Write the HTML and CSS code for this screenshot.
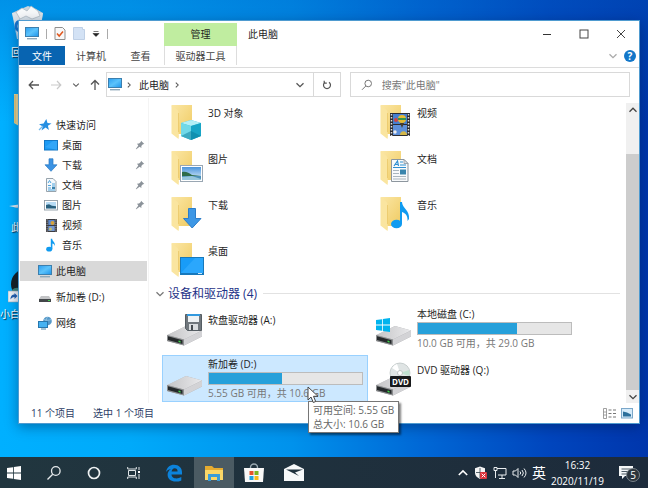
FILE: index.html
```html
<!DOCTYPE html>
<html lang="zh-CN">
<head>
    <meta charset="UTF-8">
    <meta name="viewport" content="width=device-width, initial-scale=1.0">
    <title>此电脑</title>
    <link rel="stylesheet" href="styles.css">
</head>
<body>
    <!-- Shared icons -->
    <svg class="sprite" width="0" height="0" aria-hidden="true">
        <defs>
            <linearGradient id="g-folder" x1="0" y1="0" x2="1" y2="1">
                <stop offset="0" stop-color="#fbe7a6"/><stop offset="1" stop-color="#f0cb62"/>
            </linearGradient>
            <linearGradient id="g-screen" x1="0" y1="0" x2="1" y2="1">
                <stop offset="0" stop-color="#2a9df0"/><stop offset=".5" stop-color="#5cc3fb"/><stop offset="1" stop-color="#1c93ea"/>
            </linearGradient>
            <linearGradient id="g-drive" x1="0" y1="0" x2="1" y2="0">
                <stop offset="0" stop-color="#c4c4c6"/><stop offset="1" stop-color="#e9e9eb"/>
            </linearGradient>
            <linearGradient id="g-sky" x1="0" y1="0" x2="0" y2="1">
                <stop offset="0" stop-color="#4a94dc"/><stop offset="1" stop-color="#e4f2fb"/>
            </linearGradient>
        </defs>
        <symbol id="i-pc" viewBox="0 0 14 13">
            <rect x=".5" y=".5" width="13" height="9" fill="url(#g-screen)" stroke="#3c7fae"/>
            <path d="M2 11.7h10" stroke="#8fa9ba" stroke-width="1.4"/>
        </symbol>
        <symbol id="i-desktop" viewBox="0 0 14 14">
            <rect x=".5" y="2.5" width="13" height="9.5" fill="#1d9bf5" stroke="#1377c4"/>
            <path d="M1 9l8-6h4v9z" fill="#45b2fb" opacity=".5"/>
        </symbol>
        <symbol id="i-down" viewBox="0 0 14 14">
            <path d="M5 .8h4v6h4L7 13.3 1 6.800h4z" fill="#3b93e3" stroke="#2a78c2" stroke-width=".7"/>
        </symbol>
        <symbol id="i-doc" viewBox="0 0 14 14">
            <path d="M2.500 .5h6.500l3 3v10h-9.500z" fill="#f4f8fb" stroke="#8b98a3" stroke-width=".9"/>
            <path d="M4 5l1.500-2.500L7 5M4 7.500h3M8 6h3M8 8h3M4 10h3M4 12h7" fill="none" stroke="#4da3dc"/>
            <rect x="8" y="9" width="3" height="2" fill="#3b82ac"/>
        </symbol>
        <symbol id="i-pic" viewBox="0 0 14 14">
            <rect x=".5" y="2.500" width="13" height="9.500" fill="#fff" stroke="#8f9ba5" stroke-width=".9"/>
            <rect x="2" y="4" width="10" height="6.500" fill="#b8dcf5"/>
            <path d="M2 7l3-.8 3 1.500 4 .5v2.300H2z" fill="#28607e"/>
        </symbol>
        <symbol id="i-film" viewBox="0 0 14 14">
            <rect x="2" y="1" width="11" height="13" fill="#3b3b40"/>
            <rect x="4.300" y="2" width="6.400" height="5" fill="#5d88cb"/><rect x="4.300" y="8" width="6.400" height="5" fill="#7599d2"/>
            <circle cx="8.500" cy="5" r="2" fill="#d7a33a"/><circle cx="6.500" cy="11" r="1.500" fill="#c7c06a"/>
            <path d="M3.100 1.500V14M11.900 1.500V14" stroke="#bbb" stroke-dasharray="1 1.200"/>
        </symbol>
        <symbol id="i-note" viewBox="0 0 14 14">
            <ellipse cx="5.200" cy="11.200" rx="3" ry="2.400" fill="#109bf0"/>
            <path d="M6.800 11V.8h1.400c0 3 3.600 3.200 2.500 7.500-.1-1.900-1.200-2.600-2.300-2.800V11z" fill="#109bf0"/>
        </symbol>
        <symbol id="i-star" viewBox="0 0 14 14">
            <path d="M8.300 1l1.200 4 4 .4-3.600 2.400 1 4.200-3.300-2.400L3.500 12.500l1.300-4L1 6.200l4.600-.6z" fill="#268fe2"/>
            <path d="M1 12l4-4" stroke="#73b9ec" stroke-width="1.200"/>
        </symbol>
        <symbol id="i-smalldrive" viewBox="0 0 14 14">
            <path d="M3 6h8l2 3H1z" fill="#c3c4c6"/><rect x="1" y="9" width="12" height="3" fill="#424649"/>
            <rect x="10" y="10" width="2" height="1" fill="#46d052"/>
        </symbol>
        <symbol id="i-net" viewBox="0 0 14 14">
            <circle cx="9.500" cy="5" r="4.300" fill="#5598c8"/><path d="M6 3.500c2 1 5 1 7 0M9.500 1c-2 3-2 5 0 8" stroke="#a8d0ea" fill="none" stroke-width=".7"/>
            <rect x=".5" y="5.500" width="9" height="6" fill="#45b2f2" stroke="#2777ae"/><path d="M3 13h5" stroke="#4b86a8"/>
        </symbol>
        <symbol id="i-pin" viewBox="0 0 10 10">
            <path d="M6 .7L9.300 4l-1.400.3-1.600 1.800.1 1.900L4.600 6.800 1.300 9.300.8 8.900 3.300 5.500 2 3.700l2-.1 1.800-1.500z" fill="#8b9299"/>
        </symbol>
        <symbol id="i-folder" viewBox="0 0 38 42">
            <path d="M4.500 1H25v29H11z" fill="url(#g-folder)"/>
            <path d="M4.500 1.500L10 5.500c1.300 1 1.500 2 1.500 4V28c0 2 1 3 0 7l-7-5.500z" fill="#fae5a0"/>
            <path d="M11.500 9v19" stroke="#e6bf59" stroke-width=".6"/>
        </symbol>
        <symbol id="i-drive" viewBox="0 0 38 42">
            <path d="M0 27.500L19 18l16 4.500v6L17 37.500 0 33z" fill="#a5a6a9"/>
            <path d="M0 27L19 18l16 4.500L17 31.500z" fill="url(#g-drive)"/>
            <path d="M17 31.500l18-9v6L17 37.500z" fill="#d3d3d6"/>
            <path d="M0 27l17 4.500v6L0 33z" fill="#8c8e90"/>
            <path d="M1 28.300l14.500 4v3.700L1 32z" fill="#25292b"/>
            <path d="M11.500 32.500l2 .6v1.600l-2-.6z" fill="#3fd54b"/>
        </symbol>
        <symbol id="i-win" viewBox="0 0 14 14">
            <path d="M0 2l6-.8v5.400H0zM6.800 1L14 0v6.600H6.800zM0 7.400h6v5.400L0 12zM6.800 7.400H14V14l-7.200-1z" fill="currentColor"/>
        </symbol>
        <symbol id="i-chev-down" viewBox="0 0 10 10"><path d="M1.500 3.200L5 6.700l3.500-3.500" fill="none" stroke="currentColor" stroke-width="1.300"/></symbol>
        <symbol id="i-chev-up" viewBox="0 0 10 10"><path d="M1.500 6.700L5 3.200l3.500 3.500" fill="none" stroke="currentColor" stroke-width="1.300"/></symbol>
        <symbol id="i-chev-right" viewBox="0 0 10 10"><path d="M3.500 2l3 3-3 3" fill="none" stroke="currentColor" stroke-width="1.300"/></symbol>
    </svg>

    <div class="desktop">
        <!-- Desktop icons, mostly covered by the window -->
        <div class="desk-icon bin">
            <svg width="34" height="36" viewBox="0 0 34 36">
                <path d="M1 8l9-4 7-3 8 3 7 4-5 26-19 1z" fill="#cbd6de"/>
                <path d="M1 8l31 0-4 26H6z" fill="#dfe7ec" opacity=".8"/>
                <path d="M5 7l6-4 5 3 4-5 7 5 2 5-8 3-6-3-6 3z" fill="#f7f9fa" stroke="#aab6bf" stroke-width=".7"/>
                <path d="M9 16c-4 1-5 5-3 9M5 23l4 4" stroke="#1676cf" stroke-width="3" fill="none"/>
            </svg>
            <span>回</span>
        </div>
        <div class="desk-icon files">
            <svg width="26" height="32" viewBox="0 0 26 32"><path d="M0 0h26v32H5L0 29z" fill="#f3dc95"/><path d="M1 1v28" stroke="#d9bd6a"/></svg>
        </div>
        <div class="desk-icon plane">
            <svg width="26" height="10" viewBox="0 0 26 10"><path d="M0 4L26 0v10z" fill="#e4eef4"/><path d="M5 5l21 5V4z" fill="#a9b9c3"/></svg>
            <span>此</span>
        </div>
        <div class="desk-icon app">
            <svg width="30" height="36" viewBox="0 0 30 36">
                <circle cx="18" cy="16" r="15" fill="#152024"/><path d="M4 22c4-4 9-3 14 4l-5 5C8 30 4 26 4 22z" fill="#3c8579"/>
                <rect x="0" y="23" width="11" height="11" fill="#f2f6f9" stroke="#92a4b1" stroke-width=".6"/>
                <path d="M2.500 31.500c0-4 2-5 4-5V25l3 3-3 3v-2c-2 0-3 1-4 2.500z" fill="#2361b1"/>
            </svg>
            <span>小白</span>
        </div>

        <main class="window">
            <header class="titlebar">
                <div class="quick-tools">
                    <svg width="14" height="13"><use href="#i-pc"/></svg>
                    <i class="sep"></i>
                    <button aria-label="属性">
                        <svg width="12" height="13" viewBox="0 0 12 13"><path d="M1 .5h7.500L11 3v9.500H1z" fill="#f8f8f8" stroke="#8f8f8f"/><path d="M3 6.500L5.200 9 9 4.500" fill="none" stroke="#e0571e" stroke-width="1.500"/></svg>
                    </button>
                    <button aria-label="新建文件夹">
                        <svg width="12" height="13" viewBox="0 0 12 13"><path d="M.5.500h9v2h2v10H.5z" fill="#d3e2f5" stroke="#bfd0e6"/></svg>
                    </button>
                    <button aria-label="自定义快速访问工具栏">
                        <svg width="8" height="8" viewBox="0 0 8 8"><path d="M1.500 1.500h5M1 3.500h6l-3 3z" fill="#222" stroke="#222" stroke-width=".6"/></svg>
                    </button>
                    <i class="sep"></i>
                </div>
                <div class="context-tab">管理</div>
                <h1>此电脑</h1>
                <div class="controls">
                    <button aria-label="最小化"><svg width="10" height="10"><path d="M1 5.500h8" stroke="#333"/></svg></button>
                    <button aria-label="最大化"><svg width="10" height="10"><rect x="1" y="1" width="8" height="8" fill="none" stroke="#444"/></svg></button>
                    <button aria-label="关闭"><svg width="10" height="10"><path d="M1 1l8 8M9 1L1 9" stroke="#444"/></svg></button>
                </div>
            </header>

            <nav class="ribbon">
                <button class="file">文件</button>
                <button class="tab-computer">计算机</button>
                <button class="tab-view">查看</button>
                <button class="tab-drive">驱动器工具</button>
                <div class="ribbon-end">
                    <button aria-label="展开功能区"><svg class="pale" width="10" height="10"><use href="#i-chev-down"/></svg></button>
                    <button class="help" aria-label="帮助">?</button>
                </div>
            </nav>

            <div class="addressbar">
                <div class="nav-buttons">
                    <button aria-label="后退"><svg width="12" height="10" viewBox="0 0 12 10"><path d="M11 5H1.500M5 1L1.200 5 5 9" fill="none" stroke="#555" stroke-width="1.300"/></svg></button>
                    <button aria-label="前进" disabled><svg width="12" height="10" viewBox="0 0 12 10"><path d="M1 5h9.500M7 1l3.800 4L7 9" fill="none" stroke="#c9c9c9" stroke-width="1.200"/></svg></button>
                    <button aria-label="最近位置"><svg width="8" height="8"><use href="#i-chev-down"/></svg></button>
                    <button aria-label="上移"><svg width="10" height="12" viewBox="0 0 10 12"><path d="M5 11V1.500M1 5.500l4-4 4 4" fill="none" stroke="#555" stroke-width="1.300"/></svg></button>
                </div>
                <div class="path">
                    <svg width="14" height="13"><use href="#i-pc"/></svg>
                    <svg width="8" height="8"><use href="#i-chev-right"/></svg>
                    <a href="#">此电脑</a>
                    <svg width="8" height="8"><use href="#i-chev-right"/></svg>
                    <button class="path-drop" aria-label="以前的位置"><svg width="10" height="10"><use href="#i-chev-down"/></svg></button>
                    <button class="refresh" aria-label="刷新"><svg width="10" height="10" viewBox="0 0 10 10"><path d="M3 2.200A3.500 3.500 0 1 0 7 2.200M2.200.800v2.400h2.600" fill="none" stroke="#555" stroke-width="1.200"/></svg></button>
                </div>
                <label class="search">
                    <svg width="12" height="12" viewBox="0 0 12 12"><circle cx="7.200" cy="4.500" r="3.300" fill="none" stroke="#777"/><path d="M4.800 7L1 10.800" stroke="#777"/></svg>
                    <input type="text" aria-label="搜索" placeholder='搜索"此电脑"'>
                </label>
            </div>

            <div class="body">
                <nav class="sidebar">
                    <a class="side" href="#"><svg width="14" height="14"><use href="#i-star"/></svg>快速访问</a>
                    <a class="side child" href="#"><svg width="14" height="14"><use href="#i-desktop"/></svg>桌面<svg class="pin" width="10" height="10"><use href="#i-pin"/></svg></a>
                    <a class="side child" href="#"><svg width="14" height="14"><use href="#i-down"/></svg>下载<svg class="pin" width="10" height="10"><use href="#i-pin"/></svg></a>
                    <a class="side child" href="#"><svg width="14" height="14"><use href="#i-doc"/></svg>文档<svg class="pin" width="10" height="10"><use href="#i-pin"/></svg></a>
                    <a class="side child" href="#"><svg width="14" height="14"><use href="#i-pic"/></svg>图片<svg class="pin" width="10" height="10"><use href="#i-pin"/></svg></a>
                    <a class="side child" href="#"><svg width="14" height="14"><use href="#i-film"/></svg>视频</a>
                    <a class="side child" href="#"><svg width="14" height="14"><use href="#i-note"/></svg>音乐</a>
                    <a class="side top current" href="#"><svg width="14" height="13"><use href="#i-pc"/></svg>此电脑</a>
                    <a class="side top" href="#"><svg width="14" height="14"><use href="#i-smalldrive"/></svg>新加卷 (D:)</a>
                    <a class="side top" href="#"><svg width="14" height="14"><use href="#i-net"/></svg>网络</a>
                </nav>

                <section class="content">
                    <div class="tiles folders">
                        <div class="tile">
                            <svg width="38" height="42" viewBox="0 0 38 42"><use href="#i-folder"/>
                                <path d="M14 19l10-3 10 3v13l-10 4-10-4z" fill="#35bfd6"/><path d="M14 19l10-3 10 3-10 3z" fill="#b4eff6"/><path d="M14 19l10 3v14l-10-4z" fill="#71d9e8"/><path d="M24 22l10-3v13l-10 4z" fill="#18a5c6"/><path d="M14 32l10-5 10 5-10 4z" fill="#087b99" opacity=".5"/>
                            </svg>
                            <span>3D 对象</span>
                        </div>
                        <div class="tile">
                            <svg width="38" height="42" viewBox="0 0 38 42"><use href="#i-folder"/>
                                <rect x="14" y="9" width="20" height="23" fill="#2c2d32"/><rect x="17" y="10" width="14" height="10" fill="#477fcf"/><rect x="17" y="21" width="14" height="10" fill="#5e90da"/>
                                <path d="M15.500 10v22M32.500 10v22" stroke="#dfdfdf" stroke-width="1.500" stroke-dasharray="1.500 1.500"/>
                                <circle cx="26" cy="15" r="4" fill="#e6bb33"/><path d="M22 15h8" stroke="#36964e" stroke-width="2"/><path d="M24 19l2 5 2-5z" fill="#493d2b"/><circle cx="20" cy="16" r="2" fill="#cf4644"/><path d="M24 31c0-5 7-5 7 0z" fill="#d4b749"/><circle cx="19" cy="28" r="1.700" fill="#eee"/>
                            </svg>
                            <span>视频</span>
                        </div>
                        <div class="tile">
                            <svg width="38" height="42" viewBox="0 0 38 42"><use href="#i-folder"/>
                                <rect x="13.500" y="15.500" width="22" height="16" fill="#fff" stroke="#9aa7b3"/><rect x="15" y="17" width="19" height="13" fill="url(#g-sky)"/>
                                <path d="M15 22c4-1 7 1 10 3l9 1v1H15z" fill="#2e6c49"/><path d="M15 26h19v4H15z" fill="#4d91b8"/><path d="M15 27l10-1 9 3v1H15z" fill="#97c6dc"/>
                            </svg>
                            <span>图片</span>
                        </div>
                        <div class="tile">
                            <svg width="38" height="42" viewBox="0 0 38 42"><use href="#i-folder"/>
                                <path d="M15.500 9.500H28l4 4v18H15.500z" fill="#f8fafb" stroke="#8d969e"/><path d="M28 9.500v4h4z" fill="#dde4e9" stroke="#8d969e" stroke-width=".8"/>
                                <path d="M18 16l3.500-5 1 5M19.500 14.500h3M24 12h3M24 15h6M17 17.500h13" stroke="#2f8fd1" fill="none" stroke-width="1.200"/><path d="M17 20.500h6M17 23.500h6M17 26.500h13M17 29h13" stroke="#aab6be"/><rect x="24" y="19.500" width="6" height="5" fill="#3985ad"/>
                            </svg>
                            <span>文档</span>
                        </div>
                        <div class="tile">
                            <svg width="38" height="42" viewBox="0 0 38 42"><use href="#i-folder"/>
                                <path d="M21.500 12.500h7v10H34L25.200 32 16.500 22.500h5z" fill="#3d97e5" stroke="#2b7dca"/>
                            </svg>
                            <span>下载</span>
                        </div>
                        <div class="tile">
                            <svg width="38" height="42" viewBox="0 0 38 42"><use href="#i-folder"/>
                                <ellipse cx="20.500" cy="28" rx="5.500" ry="4.300" fill="#109bf0"/><path d="M24 28V6h2c0 6 8 8 7 17l-1.500 2c.5-5-2-8-5.500-9v12z" fill="#109bf0"/>
                            </svg>
                            <span>音乐</span>
                        </div>
                        <div class="tile">
                            <svg width="38" height="42" viewBox="0 0 38 42"><use href="#i-folder"/>
                                <rect x="13.500" y="15.500" width="23" height="17" fill="#189cf8" stroke="#1879bb"/><path d="M14 31l14-15h8v15z" fill="#3eb1ff" opacity=".5"/><path d="M14 31.500h22" stroke="#1678bd"/><path d="M31 31.500h4" stroke="#c9e7fa"/>
                            </svg>
                            <span>桌面</span>
                        </div>
                    </div>

                    <h2><svg class="gray" width="10" height="10"><use href="#i-chev-down"/></svg>设备和驱动器 (4)</h2>

                    <div class="tiles drives">
                        <div class="tile plain">
                            <svg width="38" height="42" viewBox="0 0 38 42"><use href="#i-drive"/>
                                <path d="M18.500 6.500h16v16h-14l-2-2z" fill="#70777d" stroke="#555d63"/><rect x="21" y="6" width="11" height="8" fill="#eef2f4"/><rect x="20" y="6" width="13" height="2" fill="#3299de"/><rect x="22" y="16" width="9" height="6" fill="#d9dde0"/><rect x="24" y="17" width="2" height="5" fill="#454b50"/>
                            </svg>
                            <span>软盘驱动器 (A:)</span>
                        </div>
                        <div class="tile">
                            <svg class="logo-blue" width="38" height="42" viewBox="0 0 38 42"><use href="#i-drive"/><use href="#i-win" y="10" width="14" height="14"/></svg>
                            <div class="info">
                                <label for="disk-c">本地磁盘 (C:)</label>
                                <progress id="disk-c" max="100" value="65"></progress>
                                <small>10.0 GB 可用，共 29.0 GB</small>
                            </div>
                        </div>
                        <div class="tile selected">
                            <svg width="38" height="42" viewBox="0 0 38 42"><use href="#i-drive"/></svg>
                            <div class="info">
                                <label for="disk-d">新加卷 (D:)</label>
                                <progress id="disk-d" max="100" value="48"></progress>
                                <small>5.55 GB 可用，共 10.6 GB</small>
                            </div>
                            <svg class="cursor" width="13" height="18" viewBox="0 0 13 18"><path d="M1 1v13l3-3 2.300 5.500 2.400-1L6.500 10.300H11z" fill="#fff" stroke="#444"/></svg>
                            <div class="tooltip" role="tooltip">可用空间: 5.55 GB<br>总大小: 10.6 GB</div>
                        </div>
                        <div class="tile plain">
                            <svg width="38" height="42" viewBox="0 0 38 42"><use href="#i-drive"/>
                                <circle cx="24" cy="15" r="10" fill="#dfe4e4" stroke="#b6bebe" stroke-width=".7"/><path d="M24 15l-8-5a10 10 0 0 1 5-4z" fill="#fff"/><path d="M24 15l9-3a10 10 0 0 1 0 6z" fill="#bfe0cf"/><circle cx="24" cy="15" r="2.500" fill="#fff" stroke="#aab2b2" stroke-width=".7"/>
                                <rect x="14" y="18" width="21" height="11" rx="1" fill="#17191b"/><text class="dvd" x="24.500" y="27">DVD</text>
                            </svg>
                            <span>DVD 驱动器 (Q:)</span>
                        </div>
                    </div>
                </section>

                <div class="scrollbar">
                    <button aria-label="向上滚动"><svg width="10" height="10"><use href="#i-chev-up"/></svg></button>
                    <div class="track"><div class="thumb"></div></div>
                    <button aria-label="向下滚动"><svg width="10" height="10"><use href="#i-chev-down"/></svg></button>
                </div>
            </div>

            <footer class="status">
                <span>11 个项目</span>
                <span>选中 1 个项目</span>
                <div class="views">
                    <button aria-label="详细信息"><svg width="13" height="11" viewBox="0 0 13 11"><path d="M.5.500h3v10h-3zM.5 4h3M.5 7h3" fill="none" stroke="#888" stroke-width=".8"/><path d="M5.500 2h3M10 2h3M5.500 5.500h3M10 5.500h3M5.500 9h3M10 9h3" stroke="#777"/></svg></button>
                    <button aria-label="大图标"><svg width="12" height="11" viewBox="0 0 12 11"><rect x=".5" y=".5" width="11" height="9.500" fill="#d5ebfa" stroke="#7ba7c9"/><path d="M2 3.500l4 1 4 2v2H2z" fill="#2b6f9b"/></svg></button>
                </div>
            </footer>
        </main>

        <footer class="taskbar">
            <button class="start" aria-label="开始"><svg width="14" height="14"><use href="#i-win"/></svg></button>
            <button aria-label="搜索"><svg width="16" height="16" viewBox="0 0 16 16"><circle cx="9.800" cy="6" r="4.300" fill="none" stroke="#e6eaec" stroke-width="1.300"/><path d="M6.700 9.200L1.500 14.500" stroke="#e6eaec" stroke-width="1.300"/></svg></button>
            <button aria-label="Cortana"><svg width="14" height="14"><circle cx="7" cy="7" r="5.500" fill="none" stroke="#edf0f1" stroke-width="1.700"/></svg></button>
            <button aria-label="任务视图"><svg width="14" height="14" viewBox="0 0 14 14"><path d="M.7 1v2h8.600V1M.7 13v-2h8.600v2M1.500 4.500h7v5h-7zM12 1v3M12 8v5" fill="none" stroke="#dfe4e6"/><rect x="11" y="5" width="2" height="2" fill="#fff"/></svg></button>
            <button aria-label="Edge"><svg width="18" height="18" viewBox="0 0 18 18"><path d="M1 8C2 3 5 .8 9 .8c5 0 8 3.200 8 7.500v2.200H6.500c.2 3 2.500 3.900 4.800 3.900 2 0 3.500-.5 5-1.400v3.400c-1.500.8-3.500 1.200-5.600 1.200C6 17.600 2.600 15 2.600 10.800c0-2.700 1.300-4.600 3.400-5.900C3.500 5.200 2 6.500 1 8zM6.600 7.500h6c0-2-1.100-3.200-2.900-3.200-1.700 0-2.800 1.300-3.100 3.200z" fill="#0c83dc"/></svg></button>
            <button class="active" aria-label="文件资源管理器"><svg width="20" height="16" viewBox="0 0 20 16"><path d="M1 1h7l2 2h9v12H1z" fill="#e6ac30"/><path d="M1 5h18v10H1z" fill="#fbd767"/><path d="M4 9h12v7h-3v-4H7v4H4z" fill="#3a9dd9"/></svg></button>
            <button aria-label="Microsoft Store"><svg width="20" height="20" viewBox="0 0 20 20"><path d="M6.500 6V4.500a3.500 3.500 0 0 1 7 0V6" fill="none" stroke="#9baab2" stroke-width="1.400"/><path d="M0 5h20l-1 14H1z" fill="#f8f8f8"/><path d="M5.500 8h4v4h-4z" fill="#e5522b"/><path d="M10.500 8h4v4h-4z" fill="#7bb51e"/><path d="M5.500 13h4v4h-4z" fill="#1ea2df"/><path d="M10.500 13h4v4h-4z" fill="#f7b91a"/></svg></button>
            <button aria-label="邮件"><svg width="20" height="17" viewBox="0 0 20 17"><path d="M0 5l10-5 10 5v12H0z" fill="#f7f9fa"/><path d="M2 5.500h17l-8 3 4 3.500-6-3z" fill="#20323e"/></svg></button>
            <div class="tray">
                <button aria-label="显示隐藏的图标"><svg width="12" height="12"><use href="#i-chev-up"/></svg></button>
                <button aria-label="安全中心"><svg width="14" height="14" viewBox="0 0 14 14"><path d="M6 .5l5 1.800V7c0 2.500-2 4.500-5 6-3-1.500-5-3.500-5-6V2.300z" fill="#f4f4f4"/><path d="M6 2v10M2 6.500h8" stroke="#30414c" stroke-width=".8"/><rect x="6" y="6" width="7" height="7" rx="1" fill="#db343c"/><path d="M7.700 7.700l3.600 3.600M11.300 7.700l-3.600 3.600" stroke="#fff"/></svg></button>
                <button aria-label="网络"><svg width="14" height="14" viewBox="0 0 14 14"><path d="M4 2.500h9v6.500H5M1 1.500h3v3H1zM2.500 4.500V12M9 9v3M6 12.500h6" fill="none" stroke="#e9edef"/></svg></button>
                <button aria-label="音量"><svg width="15" height="14" viewBox="0 0 15 14"><path d="M1 5h2.500L6 2.500v9L3.500 9H1zM8 5.500q1.500 1.500 0 3M10 4q2.800 3 0 6M12 2.500q4 4.500 0 9" fill="none" stroke="#e9edef"/></svg></button>
                <button class="ime">英</button>
                <time datetime="2020-11-19T16:32">16:32<br>2020/11/19</time>
                <button class="notice" aria-label="5 条新通知"><svg width="14" height="14" viewBox="0 0 14 14"><path d="M0 0h14v10H6l-3 3v-3H0z" fill="#f4f6f7"/><path d="M2.500 3h9M2.500 5.500h9M2.500 8h6" stroke="#4d5b65"/></svg><span class="badge">5</span></button>
            </div>
        </footer>
    </div>
</body>
</html>
```

FILE: styles.css
```css
* {
    box-sizing: border-box;
}

body {
    margin: 0;
    font-family: "Open Sans", "Noto Sans CJK SC", sans-serif;
    font-size: 10px;
    line-height: 14px;
    color: #1f1f1f;
}

button {
    display: flex;
    align-items: center;
    justify-content: center;
    padding: 0;
    border: none;
    background: none;
    font: inherit;
    color: inherit;
}

a {
    color: inherit;
    text-decoration: none;
}

svg {
    display: block;
    flex: none;
}

.sprite {
    position: absolute;
}

.desktop {
    position: relative;
    display: flex;
    flex-direction: column;
    height: 100vh;
    overflow: hidden;
    background:
        linear-gradient(to bottom, rgba(0, 90, 190, 0.35), rgba(0, 90, 190, 0) 25%),
        linear-gradient(to right, #00b0ff 0%, #00aafa 20%, #0092ec 45%, #0068d6 65%, #0045bd 85%, #0036ac 100%);
}

/* Desktop icons */
.desk-icon {
    position: absolute;
    color: #fff;
    text-shadow: 1px 1px 1px #123;
    white-space: nowrap;
}

.bin {
    left: 11px;
    top: 5px;
}

.bin span {
    display: block;
    margin-top: 4px;
}

.files {
    left: 14px;
    top: 94px;
}

.plane {
    left: 9px;
    top: 202px;
}

.plane span {
    display: block;
    margin: 8px 0 0 2px;
}

.app {
    left: 0;
    top: 268px;
}

.app svg {
    margin-left: 8px;
}

.app span {
    display: block;
    margin-top: 3px;
}

/* Window */
.window {
    position: relative;
    flex: 1;
    display: flex;
    flex-direction: column;
    min-height: 0;
    margin: 20px 8px 33px 18px;
    border: 1px solid #4f9bd0;
    background: #fff;
    box-shadow: 0 3px 12px rgba(0, 20, 60, 0.4);
}

.titlebar {
    display: flex;
    align-items: center;
    height: 25px;
}

.quick-tools {
    display: flex;
    align-items: center;
    gap: 7px;
    width: 145px;
    padding-left: 6px;
}

.sep {
    width: 1px;
    height: 10px;
    background: #aaa;
}

.context-tab {
    align-self: flex-end;
    width: 73px;
    height: 23px;
    line-height: 22px;
    text-align: center;
    background: #c0eda0;
}

.titlebar h1 {
    margin: 0 0 0 11px;
    font-size: 10px;
    font-weight: normal;
}

.controls {
    display: flex;
    align-self: stretch;
    margin-left: auto;
}

.controls button {
    width: 37px;
}

.ribbon {
    display: flex;
    height: 22px;
    padding-bottom: 2px;
    border-bottom: 1px solid #dcdcdc;
    color: #444;
}

.ribbon .file {
    width: 46px;
    background: #0864b1;
    color: #fff;
}

.tab-computer {
    width: 52px;
}

.tab-view {
    width: 47px;
}

.tab-drive {
    width: 73px;
    border-left: 1px solid #ddd;
    border-right: 1px solid #ddd;
}

.ribbon-end {
    display: flex;
    align-items: center;
    gap: 6px;
    margin-left: auto;
    padding-right: 3px;
}

.pale {
    color: #aaa;
}

.help {
    width: 12px;
    height: 12px;
    border-radius: 50%;
    background: #1377c9;
    color: #fff;
    font-weight: bold;
}

.addressbar {
    display: flex;
    height: 30px;
    padding: 4px 9px 1px 9px;
    color: #555;
}

.nav-buttons {
    display: flex;
    align-items: center;
    justify-content: space-between;
    width: 72px;
    margin-right: 6px;
}

.path {
    display: flex;
    align-items: center;
    width: 39%;
    gap: 3px;
    padding-left: 1px;
    border: 1px solid #d9d9d9;
}

.path a {
    padding: 0 1px 0 3px;
    color: #222;
}

.path-drop {
    width: 20px;
    margin-left: auto;
}

.refresh {
    align-self: stretch;
    width: 27px;
    border-left: 1px solid #d9d9d9;
}

.search {
    display: flex;
    align-items: center;
    flex: 1;
    gap: 9px;
    margin-left: 9px;
    padding-left: 10px;
    border: 1px solid #d9d9d9;
}

.search input {
    flex: 1;
    min-width: 0;
    padding: 0;
    border: none;
    outline: none;
    font: inherit;
}

.search input::placeholder {
    color: #777;
}

.body {
    display: flex;
    flex: 1;
    min-height: 0;
}

/* Navigation pane */
.sidebar {
    width: 130px;
    padding: 17px 1px 0 1px;
    border-right: 1px solid #f4f4f4;
}

.side {
    display: flex;
    align-items: center;
    gap: 4px;
    height: 20px;
    padding-left: 18px;
}

.child {
    padding-left: 24px;
}

.top {
    margin-top: 6px;
}

.current {
    background: #d9d9d9;
}

.pin {
    margin: 0 2px 0 auto;
}

/* Files and drives */
.content {
    flex: 1;
    min-width: 0;
    padding: 2px 6px 0 6px;
}

.tiles {
    display: grid;
    grid-template-columns: repeat(2, minmax(0, 206px));
    gap: 3px;
    margin-left: 7px;
}

.tile {
    position: relative;
    display: flex;
    gap: 3px;
    height: 47px;
    padding: 1px 3px 0 4px;
    border: 1px solid transparent;
}

.folders {
    grid-auto-rows: 46px;
    row-gap: 0;
}

.folders .tile {
    padding-top: 2px;
}

.folders span {
    margin-top: 3px;
}

.tile svg {
    margin-top: 1px;
}

.plain span {
    margin-top: 6px;
}

.info {
    flex: 1;
}

.info label,
.info small {
    display: block;
    font-size: 10px;
}

.info small {
    color: #777;
}

.selected {
    background: #cce8ff;
    border-color: #99d1ff;
}

progress {
    display: block;
    width: 155px;
    height: 13px;
    margin: 1px 0;
    appearance: none;
    border: 1px solid #bcbcbc;
    background: #e6e6e6;
}

progress::-webkit-progress-bar {
    background: #e6e6e6;
}

progress::-webkit-progress-value {
    background: #26a0da;
}

.logo-blue {
    color: #00b4ee;
}

.dvd {
    fill: #fff;
    font-size: 8px;
    font-weight: bold;
    text-anchor: middle;
}

.content h2 {
    display: flex;
    align-items: center;
    gap: 3px;
    height: 21px;
    margin: 0;
    padding-bottom: 2px;
    font-size: 12px;
    font-weight: normal;
    color: #1e3287;
}

.content h2::after {
    content: "";
    flex: 1;
    height: 1px;
    margin-left: 3px;
    background: #e2e2e2;
}

.gray {
    color: #777;
}

.cursor {
    position: absolute;
    left: 144px;
    top: 29px;
    z-index: 3;
}

.tooltip {
    position: absolute;
    left: 145px;
    top: 45px;
    z-index: 2;
    padding: 1px 4px;
    border: 1px solid #767676;
    background: #fff;
    box-shadow: 2px 2px 2px rgba(0, 0, 0, 0.5);
    color: #666;
    white-space: nowrap;
}

.scrollbar {
    display: flex;
    flex-direction: column;
    width: 13px;
    padding-top: 5px;
    color: #444;
}

.scrollbar button {
    height: 13px;
    background: #f0f0f0;
}

.track {
    flex: 1;
    display: flex;
    align-items: flex-end;
    background: #f0f0f0;
}

.thumb {
    width: 100%;
    height: 86%;
    background: #cdcdcd;
}

.status {
    display: flex;
    align-items: center;
    gap: 18px;
    height: 20px;
    padding: 0 6px 0 12px;
    color: #2d3d66;
}

.views {
    display: flex;
    gap: 5px;
    margin-left: auto;
}

/* Taskbar */
.taskbar {
    display: flex;
    height: 31px;
    background: linear-gradient(to right, #21363f, #1d2b3b);
    color: #fff;
}

.taskbar > button {
    width: 40px;
}

.taskbar > .start {
    width: 34px;
    padding-right: 6px;
}

.taskbar .active {
    background: #4b5b63;
}

.tray {
    display: flex;
    align-items: center;
    gap: 5px;
    margin-left: auto;
    padding-right: 9px;
}

.ime {
    font-size: 14px;
}

.tray time {
    text-align: center;
    line-height: 16px;
}

.notice {
    position: relative;
    width: 20px;
    justify-content: flex-start;
    margin-left: 10px;
}

.badge {
    position: absolute;
    right: -1px;
    top: 2px;
    width: 14px;
    height: 14px;
    border: 1px solid #7a838a;
    border-radius: 50%;
    background: #2b343c;
    line-height: 12px;
    text-align: center;
}
```
